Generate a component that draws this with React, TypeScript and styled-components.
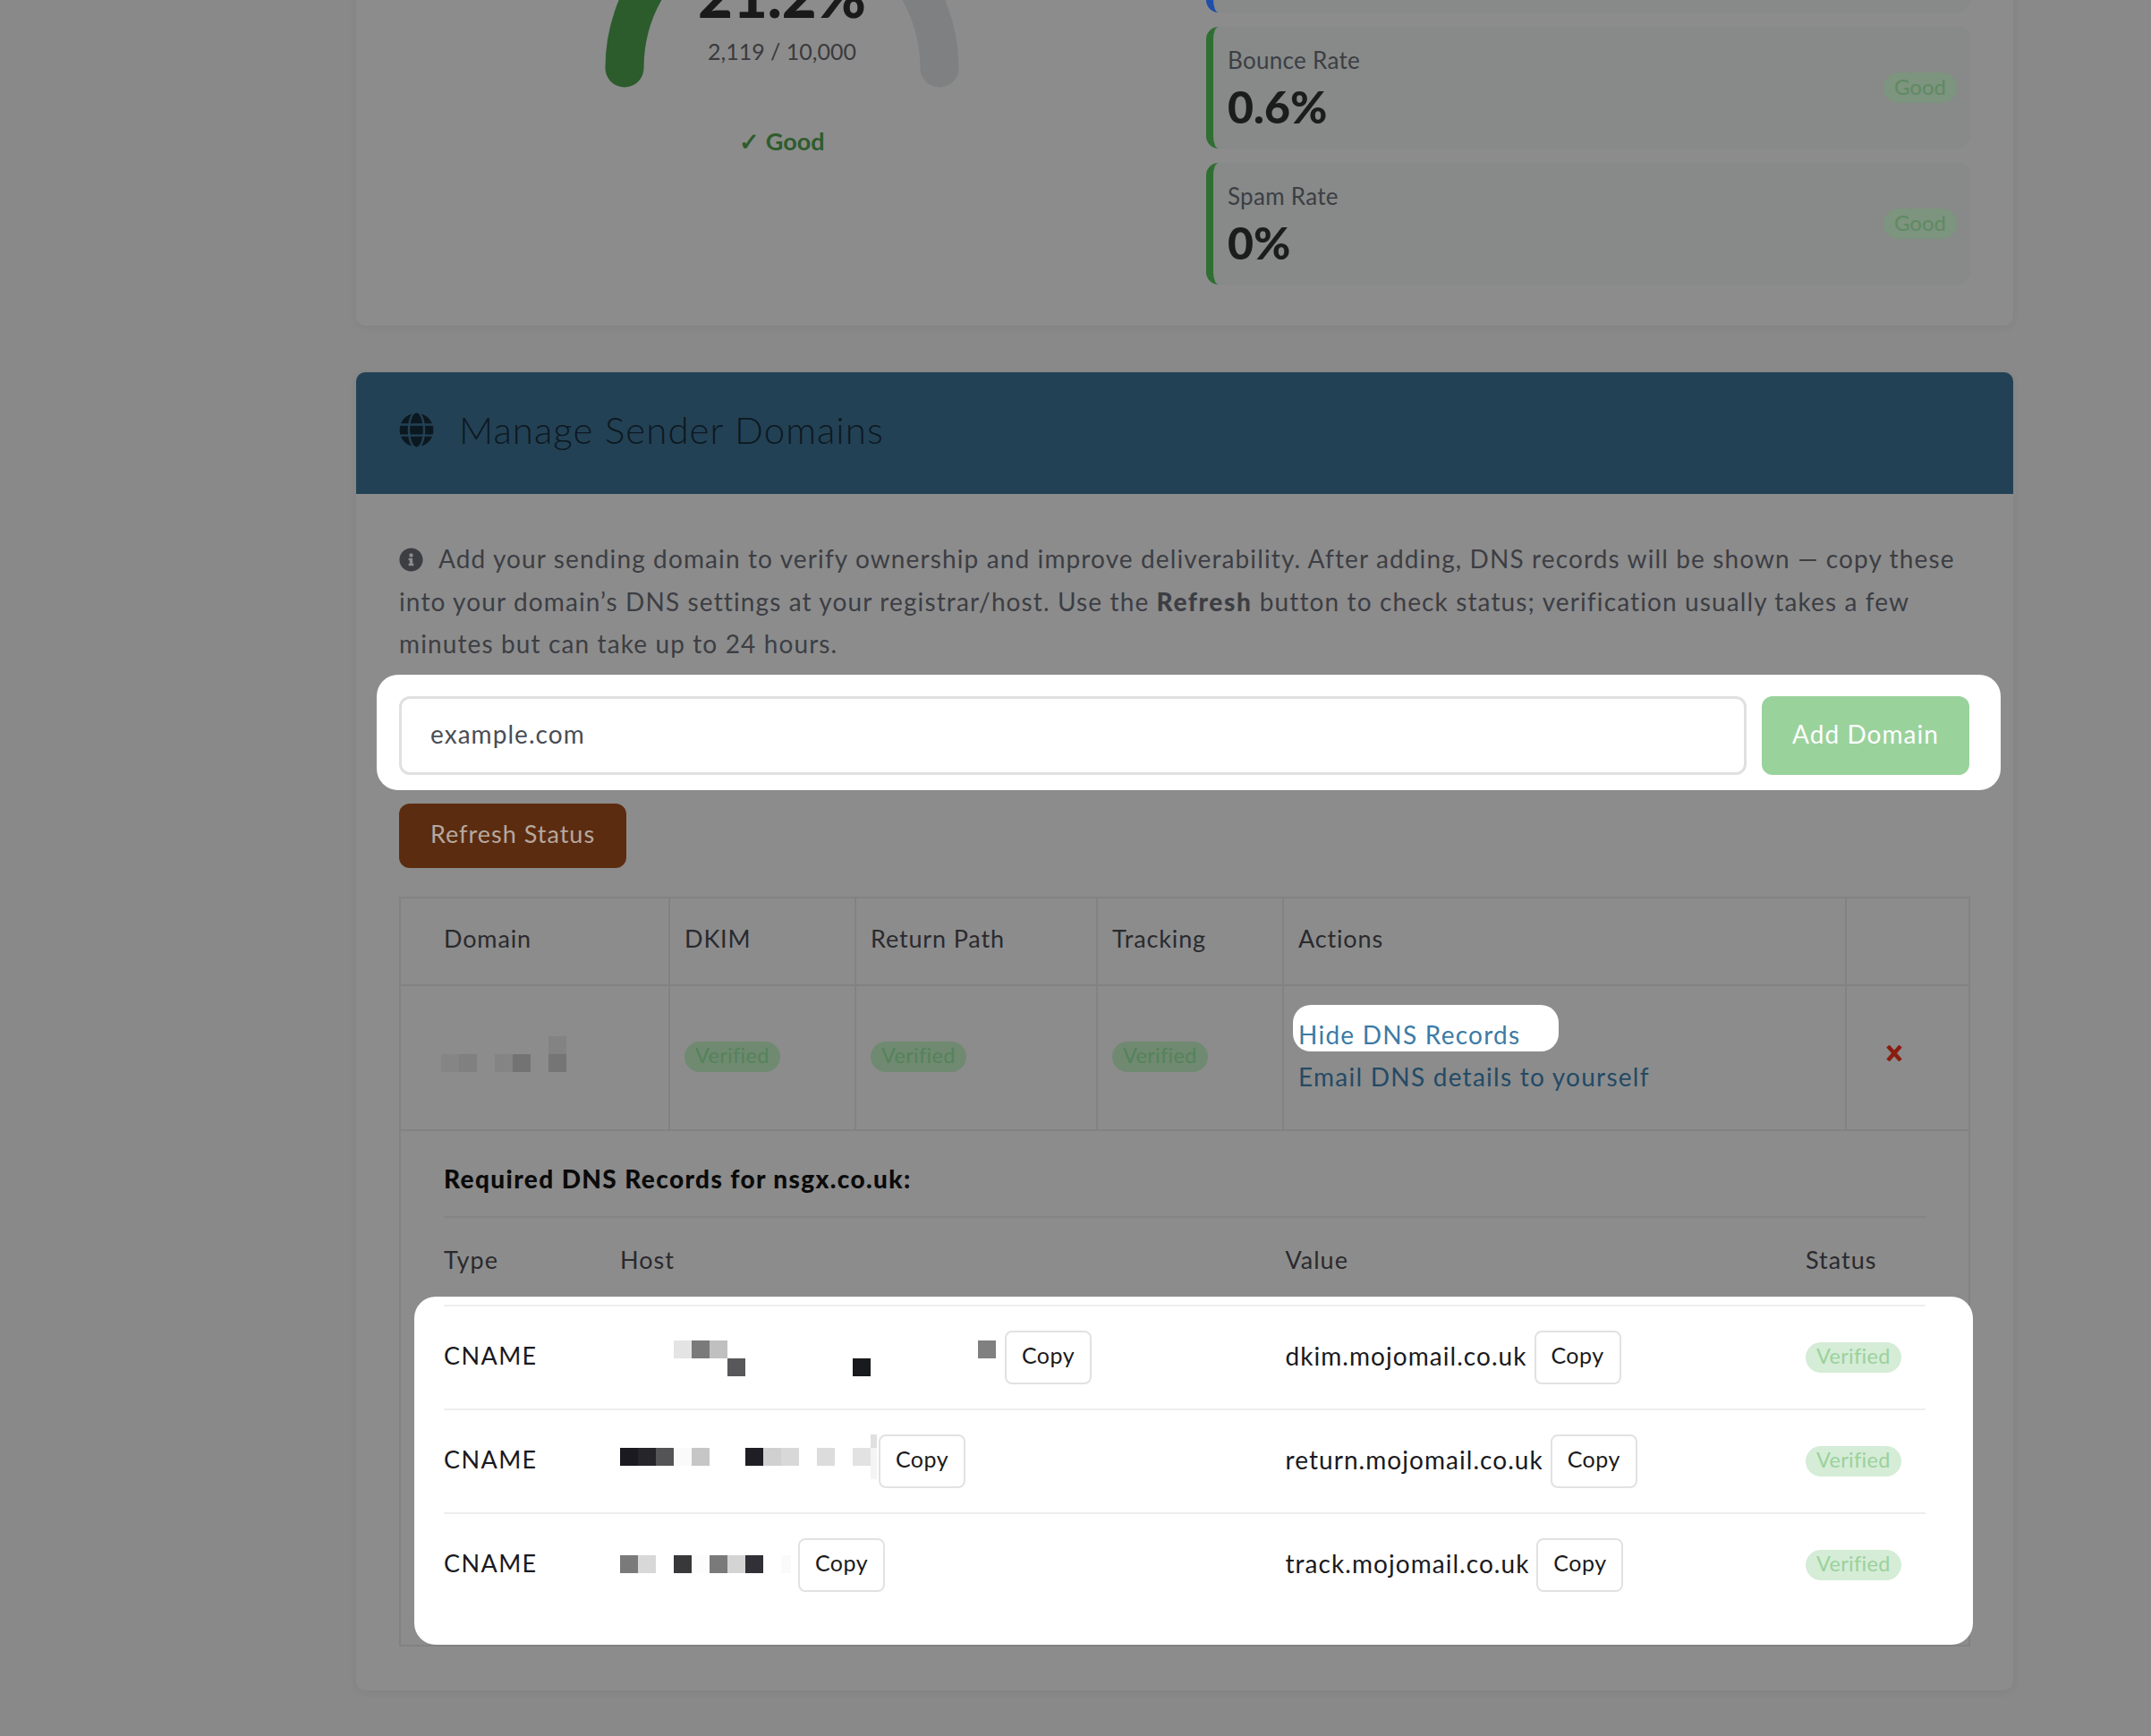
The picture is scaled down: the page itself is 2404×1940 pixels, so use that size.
import React from "react";
import styled, { createGlobalStyle } from "styled-components";
import { FaGlobe, FaInfoCircle } from "react-icons/fa";

const GlobalStyle = createGlobalStyle`
  html, body {
    margin: 0;
    padding: 0;
    background: #898989;
    font-family: "Lato", "Liberation Sans", sans-serif;
    color: #3c3e44;
  }
  * { box-sizing: border-box; }
`;

const dnsColumns = "197px 743.5px 581.5px 134px";

const Page = styled.div`
  width: 2404px;
  height: 1940px;
  overflow: hidden;
`;
const Content = styled.div`
  width: 1852px;
  margin: -170px 0 0 398px;
  display: flex;
  flex-direction: column;
  gap: 52px;
`;
const Card = styled.section`
  background: #8c8c8c;
  border-radius: 10px;
  box-shadow: 0 2px 10px rgba(0, 0, 0, 0.05);
`;
const StatsCard = styled(Card)`
  height: 534px;
  padding: 48px 49px 50px;
  display: grid;
  grid-template-columns: 854px 854px;
  gap: 47px;
`;
const GaugeColumn = styled.div`
  display: flex;
  flex-direction: column;
  align-items: center;
`;
const GaugeWrap = styled.div`
  position: relative;
  width: 400px;
  height: 220px;
`;
const GaugeLabel = styled.div`
  position: absolute;
  left: 0;
  right: 0;
  bottom: 26px;
  text-align: center;
`;
const GaugeValue = styled.div`
  font-size: 67px;
  font-weight: 900;
  line-height: 66px;
  color: #1a1a1a;
`;
const GaugeCount = styled.div`
  font-size: 25px;
  line-height: 30px;
  margin-top: 15px;
  color: #3a3a3d;
`;
const GaugeStatus = styled.div`
  margin-top: 43px;
  font-size: 27px;
  font-weight: 700;
  color: #2e5c2c;
`;
const MetricStack = styled.div`
  display: flex;
  flex-direction: column;
  justify-content: flex-end;
  gap: 16px;
`;
const Metric = styled.div<{ $accent: string }>`
  flex: none;
  height: 136px;
  padding: 0 15px 0 16px;
  display: flex;
  align-items: center;
  justify-content: space-between;
  background: #878a88;
  border-left: 8px solid ${(p) => p.$accent};
  border-radius: 14px;
`;
const MetricLabel = styled.div`
  margin-top: -4px;
  font-size: 26px;
  line-height: 30px;
  letter-spacing: 0.3px;
  color: #3c3e44;
`;
const MetricValue = styled.div`
  margin-top: 12px;
  margin-bottom: -4px;
  font-size: 50px;
  line-height: 50px;
  font-weight: 900;
  color: #1c1c1c;
`;
const GoodBadge = styled.span`
  padding: 0 12px 4px;
  height: 34px;
  display: inline-flex;
  align-items: center;
  border-radius: 17px;
  background: #7d947f;
  color: #5f8a62;
  font-size: 24px;
`;
const DomainsCard = styled(Card)`
  overflow: visible;
`;
const DomainsHeader = styled.header`
  height: 136px;
  padding: 0 48px;
  display: flex;
  align-items: center;
  gap: 28px;
  background: #234155;
  border-radius: 10px 10px 0 0;
  color: #0c1820;
  svg {
    margin-bottom: 8px;
  }
`;
const DomainsTitle = styled.h2`
  margin: 0 0 8px;
  font-size: 42px;
  font-weight: 300;
  letter-spacing: 1.05px;
`;
const DomainsBody = styled.div`
  padding: 49px 49px 49px 48px;
`;
const Intro = styled.p`
  margin: 0;
  font-size: 28px;
  line-height: 47.6px;
  letter-spacing: 1.12px;
  svg {
    vertical-align: -4px;
    margin-right: 17px;
  }
  strong {
    font-weight: 900;
    letter-spacing: 1.6px;
  }
`;
const FormSpot = styled.form`
  margin: 10px -35px 0 -25px;
  padding: 24px 35px 17px 25px;
  display: flex;
  gap: 17px;
  background: #fff;
  border-radius: 24px;
`;
const DomainInput = styled.input`
  flex: 1;
  height: 88px;
  padding: 0 32px 3px;
  border: 3px solid #e0e0e0;
  border-radius: 12px;
  font: inherit;
  font-size: 28px;
  letter-spacing: 1.05px;
  &::placeholder {
    color: #4a4d55;
    opacity: 1;
  }
`;
const AddButton = styled.button`
  width: 232px;
  height: 88px;
  padding: 0 0 4px;
  border: 0;
  border-radius: 12px;
  background: #9ad29c;
  color: #fff;
  font: inherit;
  font-size: 28px;
  letter-spacing: 1.05px;
`;
const RefreshButton = styled.button`
  display: block;
  width: 254px;
  height: 72px;
  margin-top: 15px;
  padding: 0 0 4px;
  border: 0;
  border-radius: 12px;
  background: #5c2c10;
  color: #b5a89f;
  font: inherit;
  font-size: 27px;
  letter-spacing: 1px;
`;
const DomainTable = styled.table`
  width: 1754px;
  margin-top: 32px;
  border-collapse: collapse;
  table-layout: fixed;
  font-size: 27px;
  letter-spacing: 0.85px;
`;
const HeadCell = styled.th`
  height: 98px;
  padding: 0 16px 6px;
  border: 2px solid #828282;
  text-align: left;
  font-weight: 400;
  color: #2a2a2e;
`;
const DomainHeadCell = styled(HeadCell)`
  padding-left: 48px;
`;
const BodyCell = styled.td`
  height: 162px;
  padding: 0 16px 5px;
  border: 2px solid #828282;
`;
const DomainCell = styled(BodyCell)`
  padding-left: 45px;
  padding-bottom: 8px;
`;
const ActionCell = styled(BodyCell)`
  vertical-align: top;
  padding-top: 21px;
  font-size: 28px;
  letter-spacing: 1.25px;
`;
const RemoveCell = styled(BodyCell)`
  padding: 0 0 9px 43px;
`;
const RemoveIcon = styled.svg`
  display: block;
`;
const Pixels = styled.svg`
  display: block;
  flex: none;
`;
const VerifiedBadge = styled.span<{ $on?: boolean }>`
  display: inline-flex;
  align-items: center;
  height: 34px;
  padding: 0 12px 3px;
  border-radius: 17px;
  font-size: 23.5px;
  letter-spacing: 0.3px;
  background: ${(p) => (p.$on ? "#d5ecd6" : "#6f8a71")};
  color: ${(p) => (p.$on ? "#9ad29c" : "#55825a")};
`;
const HideLink = styled.a`
  display: block;
  width: 297px;
  height: 52px;
  margin-left: -6px;
  padding: 13px 0 0 6px;
  background: #fff;
  border-radius: 20px;
  line-height: 40px;
  color: #3d7ba5;
`;
const EmailLink = styled.a`
  display: block;
  margin-top: 8px;
  line-height: 40px;
  color: #234a66;
`;
const DnsCell = styled.td`
  padding: 0 48px 0 48px;
  border: 2px solid #828282;
`;
const DnsTitle = styled.div`
  height: 97px;
  padding-top: 35px;
  border-bottom: 2px solid #848484;
  font-size: 28px;
  line-height: 36px;
  font-weight: 900;
  letter-spacing: 1.38px;
  color: #0a0a0a;
`;
const DnsHead = styled.div`
  height: 88px;
  padding-top: 29px;
  display: grid;
  grid-template-columns: ${dnsColumns};
  line-height: 36px;
  letter-spacing: 1px;
  color: #2a2a2e;
`;
const RecordsSpot = styled.div`
  position: relative;
  z-index: 1;
  margin: 0 -53px 0 -33px;
  padding: 9px 53px 32px 33px;
  background: #fff;
  border-radius: 24px;
`;
const RecordRow = styled.div`
  height: 116px;
  display: grid;
  grid-template-columns: ${dnsColumns};
  align-items: center;
  border-top: 2px solid #eee;
  color: #1a1a1e;
`;
const RecordType = styled.span`
  padding-bottom: 4px;
  letter-spacing: 1.4px;
`;
const RecordCell = styled.div`
  display: flex;
  align-items: center;
`;
const RecordValue = styled.span`
  margin-right: 8px;
  padding-bottom: 4px;
  font-size: 28px;
  letter-spacing: 1.05px;
  white-space: nowrap;
`;
const RecordStatus = styled.div`
  display: flex;
`;
const CopyButton = styled.button`
  width: 97px;
  height: 60px;
  padding: 0 0 5px;
  flex: none;
  background: #fff;
  border: 2px solid #e2e2e2;
  border-radius: 8px;
  color: #1a1a1a;
  font: inherit;
  font-size: 25px;
  letter-spacing: 0.5px;
`;

type Px = [number, number, string, number?, number?];

const PixelBlock = ({ cells, w, h }: { cells: Px[]; w: number; h: number }) => (
  <Pixels width={w} height={h}>
    {cells.map(([x, y, fill, cw, ch], i) => (
      <rect key={i} x={x} y={y} width={cw ?? 20} height={ch ?? 20} fill={fill} />
    ))}
  </Pixels>
);

const records = [
  {
    value: "dkim.mojomail.co.uk",
    width: 430,
    height: 60,
    cells: [
      [60, 11, "#e4e4e4"],
      [80, 11, "#7a7a7a"],
      [100, 11, "#c0c0c0"],
      [120, 31, "#58585a"],
      [260, 31, "#181a1e"],
      [400, 11, "#808080"],
    ] as Px[],
  },
  {
    value: "return.mojomail.co.uk",
    width: 289,
    height: 60,
    cells: [
      [0, 15, "#1a1a20"],
      [20, 15, "#26262a"],
      [40, 15, "#545456"],
      [60, 15, "#fafafa"],
      [80, 15, "#c6c6c6"],
      [140, 15, "#1e1e24"],
      [160, 15, "#d0d0d0"],
      [180, 15, "#d8d8d8"],
      [220, 15, "#dcdcdc"],
      [260, 15, "#e2e2e2"],
      [280, 0, "#e0e0e0", 7, 15],
      [280, 15, "#f4f4f4", 7, 35],
    ] as Px[],
  },
  {
    value: "track.mojomail.co.uk",
    width: 199,
    height: 60,
    cells: [
      [0, 19, "#7a7a7a"],
      [20, 19, "#d8d8d8"],
      [60, 19, "#38383a"],
      [80, 19, "#fcfcfc"],
      [100, 19, "#7a7a7a"],
      [120, 19, "#d4d4d4"],
      [140, 19, "#303036"],
      [180, 19, "#fafafa", 11],
    ] as Px[],
  },
];

const App = () => {
  return (
    <Page>
      <GlobalStyle />
      <Content>
        <StatsCard>
          <GaugeColumn>
            <GaugeWrap>
              <svg width="400" height="220" viewBox="673 -122 400 220">
                <path d="M697 76 A176 176 0 0 1 1049 76" fill="none" stroke="#7e8082" strokeWidth="43" strokeLinecap="round" />
                <path d="M697 76 A176 176 0 0 1 734 -32" fill="none" stroke="#2c5c2c" strokeWidth="43" strokeLinecap="round" />
              </svg>
              <GaugeLabel>
                <GaugeValue>21.2%</GaugeValue>
                <GaugeCount>2,119 / 10,000</GaugeCount>
              </GaugeLabel>
            </GaugeWrap>
            <GaugeStatus>✓ Good</GaugeStatus>
          </GaugeColumn>
          <MetricStack>
            <Metric $accent="#1f4fa8">
              <div>
                <MetricLabel>Delivery Rate</MetricLabel>
                <MetricValue>99%</MetricValue>
              </div>
              <GoodBadge>Good</GoodBadge>
            </Metric>
            <Metric $accent="#2f6f31">
              <div>
                <MetricLabel>Bounce Rate</MetricLabel>
                <MetricValue>0.6%</MetricValue>
              </div>
              <GoodBadge>Good</GoodBadge>
            </Metric>
            <Metric $accent="#2f6f31">
              <div>
                <MetricLabel>Spam Rate</MetricLabel>
                <MetricValue>0%</MetricValue>
              </div>
              <GoodBadge>Good</GoodBadge>
            </Metric>
          </MetricStack>
        </StatsCard>

        <DomainsCard>
          <DomainsHeader>
            <FaGlobe size={39} />
            <DomainsTitle>Manage Sender Domains</DomainsTitle>
          </DomainsHeader>
          <DomainsBody>
            <Intro>
              <FaInfoCircle size={27} />
              Add your sending domain to verify ownership and improve deliverability. After adding, DNS records will be
              shown — copy these into your domain’s DNS settings at your registrar/host. Use the <strong>Refresh</strong>{" "}
              button to check status; verification usually takes a few minutes but can take up to 24 hours.
            </Intro>
            <FormSpot>
              <DomainInput placeholder="example.com" />
              <AddButton type="button">Add Domain</AddButton>
            </FormSpot>
            <RefreshButton type="button">Refresh Status</RefreshButton>
            <DomainTable>
              <colgroup>
                <col width="301" />
                <col width="208" />
                <col width="270" />
                <col width="208" />
                <col width="629" />
                <col width="138" />
              </colgroup>
              <thead>
                <tr>
                  <DomainHeadCell>Domain</DomainHeadCell>
                  <HeadCell>DKIM</HeadCell>
                  <HeadCell>Return Path</HeadCell>
                  <HeadCell>Tracking</HeadCell>
                  <HeadCell>Actions</HeadCell>
                  <HeadCell />
                </tr>
              </thead>
              <tbody>
                <tr>
                  <DomainCell>
                    <PixelBlock
                      w={140}
                      h={40}
                      cells={[
                        [0, 20, "#858585"],
                        [20, 20, "#808080"],
                        [60, 20, "#848484"],
                        [80, 20, "#737373"],
                        [120, 0, "#838383"],
                        [120, 20, "#757575"],
                      ]}
                    />
                  </DomainCell>
                  <BodyCell>
                    <VerifiedBadge>Verified</VerifiedBadge>
                  </BodyCell>
                  <BodyCell>
                    <VerifiedBadge>Verified</VerifiedBadge>
                  </BodyCell>
                  <BodyCell>
                    <VerifiedBadge>Verified</VerifiedBadge>
                  </BodyCell>
                  <ActionCell>
                    <HideLink>Hide DNS Records</HideLink>
                    <EmailLink>Email DNS details to yourself</EmailLink>
                  </ActionCell>
                  <RemoveCell>
                    <RemoveIcon width="20" height="18" viewBox="0 0 20 18">
                      <path d="M3 1 L17 17 M17 1 L3 17" stroke="#8a1c10" strokeWidth="4.5" />
                    </RemoveIcon>
                  </RemoveCell>
                </tr>
                <tr>
                  <DnsCell colSpan={6}>
                    <DnsTitle>Required DNS Records for nsgx.co.uk:</DnsTitle>
                    <DnsHead>
                      <span>Type</span>
                      <span>Host</span>
                      <span>Value</span>
                      <span>Status</span>
                    </DnsHead>
                    <RecordsSpot>
                      {records.map((r) => (
                        <RecordRow key={r.value}>
                          <RecordType>CNAME</RecordType>
                          <RecordCell>
                            <PixelBlock cells={r.cells} w={r.width} h={r.height} />
                            <CopyButton type="button">Copy</CopyButton>
                          </RecordCell>
                          <RecordCell>
                            <RecordValue>{r.value}</RecordValue>
                            <CopyButton type="button">Copy</CopyButton>
                          </RecordCell>
                          <RecordStatus>
                            <VerifiedBadge $on>Verified</VerifiedBadge>
                          </RecordStatus>
                        </RecordRow>
                      ))}
                    </RecordsSpot>
                  </DnsCell>
                </tr>
              </tbody>
            </DomainTable>
          </DomainsBody>
        </DomainsCard>
      </Content>
    </Page>
  );
};
export default App;
